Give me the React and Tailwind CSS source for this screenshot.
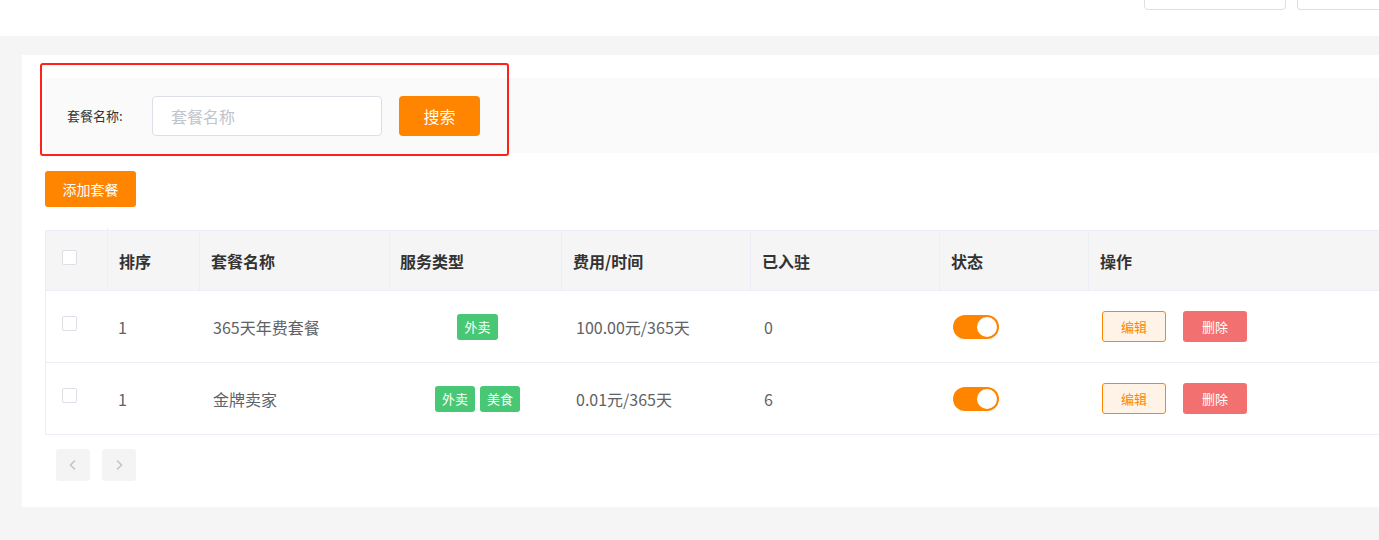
import React from "react";

const FONT = { fontFamily: '"Noto Sans CJK SC", "Noto Sans", sans-serif' };

function Checkbox() {
  return <span className="inline-block w-[15px] h-[15px] border border-[#dcdfe6] rounded-[2px] bg-white" />;
}

function Tag({ children }) {
  return (
    <span className="inline-flex items-center justify-center h-[26px] px-[7px] rounded-[3px] bg-[#48c774] text-white text-[13px] leading-none">
      {children}
    </span>
  );
}

function Toggle() {
  return (
    <span className="relative inline-block w-[46px] h-[24px] rounded-full bg-[#ff8400]">
      <span className="absolute right-[2px] top-[2px] w-[20px] h-[20px] rounded-full bg-white" />
    </span>
  );
}

const cols = "grid grid-cols-[62px_92px_190px_172px_189px_189px_149px_1fr]";

function Row({ name, tags, fee, count }) {
  return (
    <div className={`${cols} h-[72px] border-b border-[#ebeef5] text-[16px] text-[#606266] items-center`}>
      <div className="pl-[16px] -mt-[6px]"><Checkbox /></div>
      <div className="pl-[10px]">1</div>
      <div className="pl-[13px]">{name}</div>
      <div className="flex justify-center gap-[5px] pl-[3px]">
        {tags.map((t) => <Tag key={t}>{t}</Tag>)}
      </div>
      <div className="pl-[14px]">{fee}</div>
      <div className="pl-[13px]">{count}</div>
      <div className="pl-[13px] flex items-center"><Toggle /></div>
      <div className="pl-[13px] flex items-center gap-[17px]">
        <button className="w-[64px] h-[31px] rounded-[3px] border border-[#ff8400] bg-[#fff3e8] text-[#ff8400] text-[13px]">编辑</button>
        <button className="w-[64px] h-[31px] rounded-[3px] bg-[#f37070] text-white text-[13px]">删除</button>
      </div>
    </div>
  );
}

export default function App() {
  return (
    <div style={FONT} className="w-[1379px] h-[540px] overflow-hidden bg-[#f5f5f5]">
      <div className="h-[36px] bg-white flex justify-end gap-[11px] overflow-hidden">
        <div className="w-[142px] h-[40px] -mt-[30px] border border-[#dcdfe6] rounded-[4px] flex items-center justify-center text-[14px] text-[#606266] pt-[2px]">
          <span className="-mt-[1px]">导出数据</span>
        </div>
        <div className="w-[82px] h-[40px] -mt-[30px] border border-[#dcdfe6] border-r-0 rounded-l-[4px] flex items-center pl-[50px] text-[14px] text-[#606266]">
          <span className="-mt-[1px] whitespace-nowrap">刷新</span>
        </div>
      </div>
      <div className="pt-[19px] pl-[22px]">
        <div className="relative bg-white h-[452px] pt-[23px] pl-[23px]">
          <div className="h-[75px] bg-[#fafafa] flex items-center pl-[22px]">
            <span className="text-[13px] text-[#333] w-[85px]">套餐名称:</span>
            <div className="w-[230px] h-[40px] bg-white border border-[#dcdfe6] rounded-[4px] flex items-center pl-[18px] text-[16px] text-[#c0c4cc]">
              套餐名称
            </div>
            <button className="ml-[17px] w-[81px] h-[40px] rounded-[4px] bg-[#ff8400] text-white text-[16px]">搜索</button>
          </div>
          <div className="mt-[18px]">
            <button className="w-[91px] h-[36px] rounded-[3px] bg-[#ff8400] text-white text-[14px]">添加套餐</button>
          </div>
          <div className="mt-[23px] border-l border-t border-[#ebeef5]">
            <div className={`${cols} h-[60px] bg-[#f5f5f5] border-b border-[#ebeef5] text-[16px] font-bold text-[#333] items-center`}>
              <div className="pl-[16px] h-full flex items-center border-r border-[#ebeef5] -mt-[6px]"><Checkbox /></div>
              <div className="pl-[11px] h-full flex items-center border-r border-[#ebeef5]">排序</div>
              <div className="pl-[11px] h-full flex items-center border-r border-[#ebeef5]">套餐名称</div>
              <div className="pl-[10px] h-full flex items-center border-r border-[#ebeef5]">服务类型</div>
              <div className="pl-[11px] h-full flex items-center border-r border-[#ebeef5]">费用/时间</div>
              <div className="pl-[11px] h-full flex items-center border-r border-[#ebeef5]">已入驻</div>
              <div className="pl-[11px] h-full flex items-center border-r border-[#ebeef5]">状态</div>
              <div className="pl-[11px] h-full flex items-center">操作</div>
            </div>
            <Row name="365天年费套餐" tags={["外卖"]} fee="100.00元/365天" count="0" />
            <Row name="金牌卖家" tags={["外卖", "美食"]} fee="0.01元/365天" count="6" />
          </div>
          <div className="mt-[14px] ml-[11px] flex gap-[12px]">
            <button className="w-[34px] h-[32px] rounded-[3px] bg-[#f4f4f5] flex items-center justify-center">
              <svg width="10" height="12" viewBox="0 0 10 12" fill="none" stroke="#c0c4cc" strokeWidth="1.6"><path d="M7 1.5 L2.5 6 L7 10.5" /></svg>
            </button>
            <button className="w-[34px] h-[32px] rounded-[3px] bg-[#f4f4f5] flex items-center justify-center">
              <svg width="10" height="12" viewBox="0 0 10 12" fill="none" stroke="#c0c4cc" strokeWidth="1.6"><path d="M3 1.5 L7.5 6 L3 10.5" /></svg>
            </button>
          </div>
          <div className="absolute left-[18px] top-[8px] w-[469px] h-[93px] border-2 border-[#ff2218] rounded-[3px] pointer-events-none" />
        </div>
      </div>
    </div>
  );
}
